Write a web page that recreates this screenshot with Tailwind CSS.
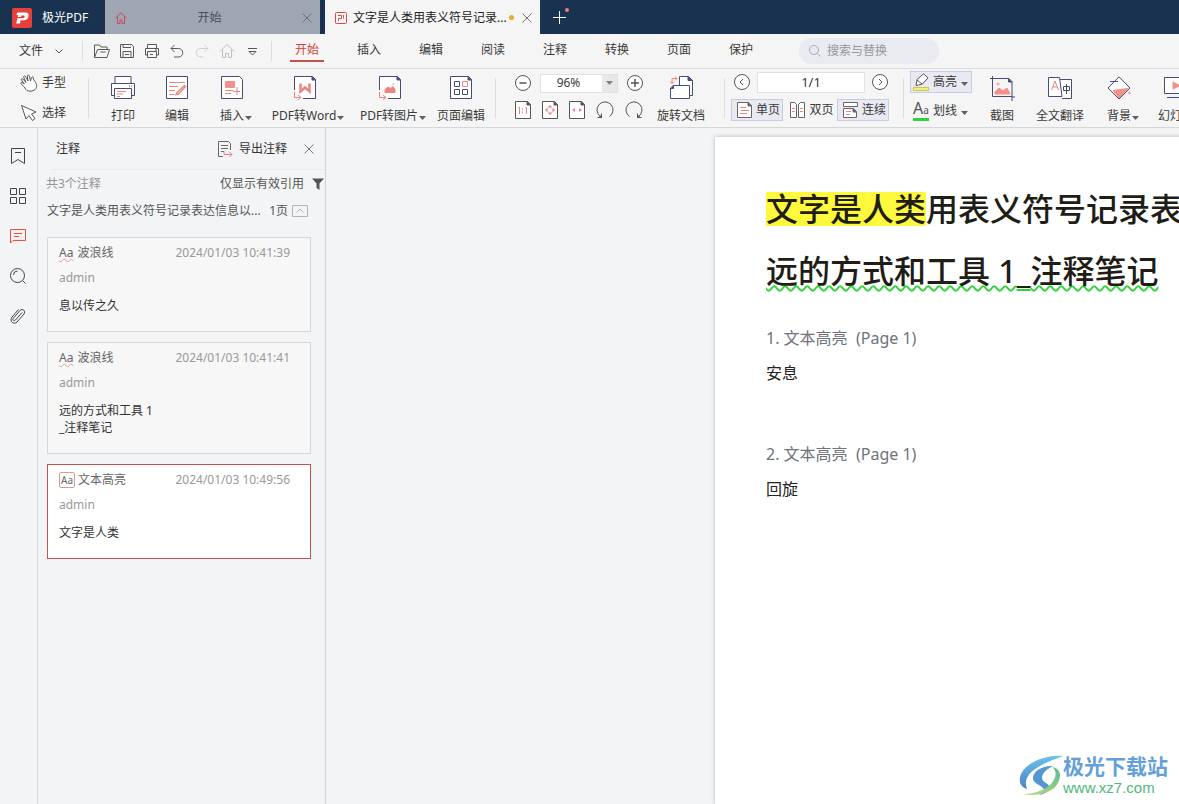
<!DOCTYPE html>
<html lang="zh-CN">
<head>
<meta charset="utf-8">
<title>极光PDF</title>
<script src="https://cdn.jsdelivr.net/npm/@tailwindcss/browser@4"></script>
</head>
<body class="flex h-screen flex-col overflow-hidden bg-[#f3f4f6] font-['Noto_Sans','Noto_Sans_CJK_SC',sans-serif] text-xs text-[#333]">

<svg class="hidden">
  <symbol id="caret" viewBox="0 0 7 4"><path d="M0 0h7L3.500 4z" fill="#606060"/></symbol>
  <symbol id="close" viewBox="0 0 10 10"><path d="M.5.5l9 9M9.500.5l-9 9" fill="none" stroke="currentColor"/></symbol>
</svg>

<header class="flex h-[34px] shrink-0 bg-[#19324f]">
  <div class="flex w-[105px] shrink-0 items-center gap-2.5 pt-px pl-3 text-white">
    <svg class="size-5" viewBox="0 0 20 20"><rect width="20" height="20" rx="2" fill="#e5403c"/><path d="M5.500 4.500h8c2.500 0 3.400 1.600 3 4-.5 2.600-2.300 3.800-4.800 3.800H8.600L8 15.500H4.300l1-5.200h5.200c1.200 0 1.900-.4 2.100-1.400.2-1.100-.3-1.500-1.400-1.500H9.300L9 9H5.700l.4-2H4.300z" fill="#fff"/></svg>
    <span>极光PDF</span>
  </div>
  <nav class="flex min-w-0">
    <div class="mr-[5px] flex w-[215px] items-center bg-[#9da6b2] pt-px pr-2 pl-2.5 text-[#4a5058]">
      <svg class="size-3 text-[#d2494b]" viewBox="0 0 12 12" fill="none" stroke="currentColor"><path d="M.5 6L6 .8 11.500 6M2.500 4.500v7h2.500V8h2v3.500h2.500v-7"/></svg>
      <a href="#" class="mr-2.5 flex-1 text-center">开始</a>
      <button aria-label="关闭开始" class="text-[#68707a]"><svg class="size-2.5"><use href="#close"/></svg></button>
    </div>
    <div class="flex w-[215px] items-center bg-[#f5f5f6] pt-px pr-2 pl-2.5 text-[#222]">
      <svg class="mr-1.5 size-3 shrink-0" viewBox="0 0 12 12" fill="none" stroke="#d14b49"><rect x=".5" y=".5" width="11" height="11" rx="1"/><path d="M3.500 9V6.500H6.500V3.500H3M8.500 3v3.500"/></svg>
      <a href="#" class="whitespace-nowrap">文字是人类用表义符号记录...</a>
      <span class="ml-auto size-[5px] rounded-full bg-[#e8ab2e]"></span>
      <button aria-label="关闭文档" class="ml-2 text-[#777]"><svg class="size-2.5"><use href="#close"/></svg></button>
    </div>
    <button aria-label="新建标签页" class="pl-3"><svg class="h-5 w-[18px]" viewBox="0 0 18 20"><path d="M1 10.500h13M7.500 4v13" stroke="#fff" fill="none"/><circle cx="15" cy="3" r="2" fill="#e87f7d"/></svg></button>
  </nav>
</header>

<div class="flex h-[35px] shrink-0 items-center border-b border-[#dcdde0] bg-[#f5f5f6] text-[#3a3a3a]">
  <button class="ml-[19px] flex w-[63px] items-center gap-3">文件<svg class="h-[5px] w-2" viewBox="0 0 8 5"><path d="M.5.5L4 4 7.500.5" fill="none" stroke="#555"/></svg></button>
  <span class="mr-[11px] h-5 w-px bg-[#dcdde0]"></span>
  <div class="flex items-center gap-[9px] text-[#5a5a5a]">
    <button aria-label="打开"><svg class="size-4" viewBox="0 0 16 16" fill="none" stroke="currentColor"><path d="M.5 14V2h5l1.500 2h6v2.500M.5 14.500l3-8h12l-2.500 8zM6.500 9h5"/></svg></button>
    <button aria-label="保存"><svg class="size-4" viewBox="0 0 16 16" fill="none" stroke="currentColor"><path d="M1.500 1.500h11l2 2v11h-13zM4 1.500v3h8M4 14V8.500h8V14M6 11.500h4"/></svg></button>
    <button aria-label="打印"><svg class="size-4" viewBox="0 0 16 16" fill="none" stroke="currentColor"><path d="M3.500 5V1.500h9V5M3.500 12H1.500V5.500h13V12h-2M3.500 8.500h9v6h-9zM11 7h2M6 11.500h3"/></svg></button>
    <button aria-label="撤销"><svg class="size-4" viewBox="0 0 16 16" fill="none" stroke="currentColor"><path d="M5.500 2L2 5.500 5.500 9M2 5.500h7.500a4.200 4.200 0 010 8.500H5"/></svg></button>
    <button aria-label="重做" class="text-[#cfcfcf]"><svg class="size-4" viewBox="0 0 16 16" fill="none" stroke="currentColor"><path d="M10.500 2L14 5.500 10.500 9M14 5.500H6.500a4.200 4.200 0 000 8.500H9"/></svg></button>
    <button aria-label="主页" class="text-[#bdbdbd]"><svg class="size-4" viewBox="0 0 16 16" fill="none" stroke="currentColor"><path d="M1 8.500l7-7 7 7M3.500 6.500v8h3v-4h3v4h3v-8"/></svg></button>
    <button aria-label="更多"><svg class="size-4" viewBox="0 0 16 16" fill="none" stroke="currentColor"><path d="M4 5.500h9M5 8.500h7l-3.500 3.500z"/></svg></button>
  </div>
  <span class="ml-[11px] h-5 w-px bg-[#dcdde0]"></span>
  <nav class="ml-[18px] flex gap-7">
    <a href="#" class="w-[34px] border-b-2 border-[#c5514d] text-center leading-5 text-[#d03f3b]">开始</a>
    <a href="#" class="w-[34px] text-center leading-5">插入</a>
    <a href="#" class="w-[34px] text-center leading-5">编辑</a>
    <a href="#" class="w-[34px] text-center leading-5">阅读</a>
    <a href="#" class="w-[34px] text-center leading-5">注释</a>
    <a href="#" class="w-[34px] text-center leading-5">转换</a>
    <a href="#" class="w-[34px] text-center leading-5">页面</a>
    <a href="#" class="w-[34px] text-center leading-5">保护</a>
  </nav>
  <label class="ml-[41px] flex h-[26px] w-[140px] items-center gap-1.5 rounded-full bg-[#e9eaf2] pl-2.5">
    <svg class="size-3 shrink-0" viewBox="0 0 12 12" fill="none" stroke="#a9aab2"><circle cx="5" cy="5" r="4.500"/><path d="M8.500 8.500l3 3"/></svg>
    <input aria-label="搜索与替换" placeholder="搜索与替换" class="w-24 bg-transparent outline-none placeholder:text-[#96979d]">
  </label>
</div>

<div class="flex h-[59px] shrink-0 items-center overflow-hidden border-b border-[#d4d6d8] bg-[#f5f5f5] whitespace-nowrap text-[#3a3a3a] *:shrink-0">
  <div class="flex w-[88px] flex-col gap-3 pl-5">
    <button class="flex items-center gap-1"><svg class="size-[18px]" viewBox="0 0 18 18" fill="#fff" stroke="#555"><path d="M6 15.500c-1-2-3.500-4-5-5.800-.6-1 .6-1.700 1.500-1l1.800 1.200L1.500 6c-.7-1.300.8-2 1.600-.9L6 8.500 3.800 3.300c-.5-1.400 1.100-2 1.800-.7L8 7 7.300 2.200c-.1-1.400 1.600-1.500 2-.2L10.500 7l1-3.400c.4-1.200 2-.9 1.800.4-.3 2 2.400 3.500 3.200 6.500s-1.500 6-4.500 6.500S7 17 6 15.500z"/></svg>手型</button>
    <button class="flex items-center gap-1"><svg class="size-[18px]" viewBox="0 0 18 18" fill="#fff" stroke="#555"><path d="M1.500 1.500L6 15l3-3.500 3.500 5 2.500-2-3.500-4.500 4.500-2z"/></svg>选择</button>
  </div>
  <span class="mr-[7px] h-10 w-px bg-[#dcdde0]"></span>
  <button class="flex w-[54px] flex-col items-center gap-1.5 pt-1.5"><svg class="size-6" viewBox="0 0 24 24" fill="#fff" stroke="#474b76"><path d="M4 8V.5h16V8"/><path d="M3.500 19.500h-3v-12h23v12h-3"/><path d="M3.500 12.500h17v10h-17zM18 10h1M20 10h1"/><path d="M6 15.500h9M6 18h6M6 20.500h3" stroke="#e98680"/></svg><span class="leading-5">打印</span></button>
  <button class="flex w-[54px] flex-col items-center gap-1.5 pt-1.5"><svg class="size-6" viewBox="0 0 24 24" fill="none" stroke="#474b76"><path d="M1.500.5h21v22h-21z" fill="#fff"/><path d="M4 6.500h16M4 10.500h9M4 14.500h6M4 18.500h5" stroke="#e98680"/><path d="M20 9l-8 7.500-1 2 2.500-.5L21 10" stroke="#e98680" stroke-width="1.400"/></svg><span class="leading-5">编辑</span></button>
  <button class="flex w-14 flex-col items-center gap-1.5 pt-1.5"><svg class="size-6" viewBox="0 0 24 24" fill="none" stroke="#474b76"><path d="M1.500.5h18l3 3v19h-21z" fill="#fff"/><path d="M5.500 5.500h9v6h-9z" fill="#f58f89" stroke="#f58f89"/><path d="M5 14.500h8M5 17.500h6M17 11v8M13 15.500h7" stroke="#e98680"/></svg><span class="-mr-2 flex items-center gap-px leading-5">插入<svg class="mt-1 h-1 w-[7px]"><use href="#caret"/></svg></span></button>
  <button class="flex w-[90px] flex-col items-center gap-1.5 pt-1.5"><svg class="size-6" viewBox="0 0 24 24" fill="none" stroke="#474b76"><path d="M1.500 14V.5h18l3 3v19H10" fill="#fff"/><path d="M19 .5V4h3.500" fill="#474b76"/><path d="M7.500 7.500v8l4.500-4 4.500 4v-8" stroke="#e98680" stroke-width="2.500"/><path d="M1.500 16v5.500h6M5 19l3 2.500L5 24" stroke="#e98680"/></svg><span class="-mr-1.5 flex items-center gap-px leading-5">PDF转Word<svg class="mt-1 h-1 w-[7px]"><use href="#caret"/></svg></span></button>
  <button class="flex w-20 flex-col items-center gap-1.5 pt-1.5"><svg class="size-6" viewBox="0 0 24 24" fill="none" stroke="#474b76"><path d="M1.500 14V.5h18l3 3v19H10" fill="#fff"/><path d="M19 .5V4h3.500" fill="#474b76"/><path d="M7 16.500v-3l3-2.500 2.500 1.500 2.500-2 2 3v3zM14.500 8h1.500" fill="#e98680" stroke="#e98680"/><path d="M1.500 16v5.500h6M5 19l3 2.500L5 24" stroke="#e98680"/></svg><span class="-mr-1.5 flex items-center gap-px leading-5">PDF转图片<svg class="mt-1 h-1 w-[7px]"><use href="#caret"/></svg></span></button>
  <button class="flex w-[62px] flex-col items-center gap-1.5 pt-1.5"><svg class="size-6" viewBox="0 0 24 24" fill="none" stroke="#474b76"><path d="M1.500.5h18l3 3v19h-21z" fill="#fff"/><path d="M19 .5V4h3.500" fill="#474b76"/><path d="M5.500 5.500h5v5h-5zM5.500 13.500h5v5h-5zM13.500 13.500h5v5h-5z"/><path d="M13.500 5.500h5v5h-5z" stroke="#e98680"/></svg><span class="leading-5">页面编辑</span></button>
  <span class="mr-[19px] ml-[3px] h-10 w-px bg-[#dcdde0]"></span>

  <div class="flex w-32 flex-col gap-2 pb-1">
    <div class="flex items-center justify-between">
      <button aria-label="缩小"><svg class="size-4" viewBox="0 0 16 16" fill="#fff" stroke="#555"><circle cx="8" cy="8" r="7.500"/><path d="M4.500 8h7" stroke-width="1.500"/></svg></button>
      <div class="flex h-[19px] w-[78px] border border-[#dfe0e2] bg-white">
        <input aria-label="缩放比例" value="96%" class="w-0 flex-1 pr-1.5 text-center outline-none">
        <button aria-label="选择比例" class="flex w-[15px] items-center justify-center bg-[#e3e3e3] opacity-80"><svg class="h-1 w-[7px]"><use href="#caret"/></svg></button>
      </div>
      <button aria-label="放大"><svg class="size-4" viewBox="0 0 16 16" fill="#fff" stroke="#555"><circle cx="8" cy="8" r="7.500"/><path d="M4 8h8M8 4v8" stroke-width="1.500"/></svg></button>
    </div>
    <div class="flex justify-between">
      <button aria-label="实际大小"><svg class="h-[18px] w-4" viewBox="0 0 16 18" fill="none" stroke="#555"><path d="M.5.5h12l3 3v14H.5z" fill="#fff"/><path d="M12 .5V4h3.500" fill="#555"/><path d="M4.500 13V6l-1 1M11.500 13V6l-1 1M7.500 7v1.500M7.500 10.500V12" stroke="#e98680"/></svg></button>
      <button aria-label="适合页面"><svg class="h-[18px] w-4" viewBox="0 0 16 18" fill="none" stroke="#555"><path d="M.5.5h12l3 3v14H.5z" fill="#fff"/><path d="M12 .5V4h3.500" fill="#555"/><path d="M8 4l2 2H6zM8 14l2-2H6zM3 9l2-2v4zM13 9l-2-2v4z" fill="#e98680" stroke="none"/><circle cx="8" cy="9" r="2.800" stroke="#f0b0ac"/></svg></button>
      <button aria-label="适合宽度"><svg class="h-[18px] w-4" viewBox="0 0 16 18" fill="none" stroke="#555"><path d="M.5.5h12l3 3v14H.5z" fill="#fff"/><path d="M12 .5V4h3.500" fill="#555"/><path d="M3 9l3-2v4zM13 9l-3-2v4z" fill="#e98680" stroke="none"/></svg></button>
      <button aria-label="逆时针旋转"><svg class="h-[18px] w-[18px]" viewBox="0 0 18 18" fill="none" stroke="#555"><path d="M13.500 15.500a8 8 0 10-9 0M1.500 16.500h4v-4"/><path d="M3 16.500h2.500V14z" fill="#555"/></svg></button>
      <button aria-label="顺时针旋转"><svg class="h-[18px] w-[18px]" viewBox="0 0 18 18" fill="none" stroke="#555"><path d="M4.500 15.500a8 8 0 119 0M16.500 16.500h-4v-4"/><path d="M15 16.500h-2.500V14z" fill="#555"/></svg></button>
    </div>
  </div>
  <button class="ml-1.5 flex w-16 flex-col items-center gap-1.5 pt-1.5"><svg class="size-6" viewBox="0 0 24 24" fill="#fff" stroke="#474b76"><path d="M10.500 10V.5h9l4 4v15h-3"/><path d="M19 .5v4h4.500" fill="#474b76"/><path d="M1.500 12l3-2.500h16v13h-19z"/><path d="M4.500 9.500v3h-3" fill="#474b76"/><path d="M8 2.500H3v5M6 .5l2 2-2 2M1 5.500l2 2 2-2" stroke="#e98680" fill="none"/></svg><span class="leading-5">旋转文档</span></button>
  <span class="mr-1.5 ml-[11px] h-10 w-px bg-[#dcdde0]"></span>

  <div class="flex w-[158px] flex-col gap-1.5 pb-1">
    <div class="flex items-center justify-between pr-px pl-[3px]">
      <button aria-label="上一页"><svg class="size-4" viewBox="0 0 16 16" fill="#fff" stroke="#555"><circle cx="8" cy="8" r="7.500"/><path d="M9 5L6 8l3 3" fill="none"/></svg></button>
      <input aria-label="页码" value="1/1" class="h-[21px] w-[108px] border border-[#e2e2e4] bg-white text-center text-[13px] outline-none">
      <button aria-label="下一页"><svg class="size-4" viewBox="0 0 16 16" fill="#fff" stroke="#555"><circle cx="8" cy="8" r="7.500"/><path d="M7 5l3 3-3 3" fill="none"/></svg></button>
    </div>
    <div class="flex items-center justify-between">
      <button class="flex h-[22px] items-center gap-1 border border-[#c9cce0] bg-[#e8e9f3] pr-0.5 pl-[5px]"><svg class="h-4 w-[15px]" viewBox="0 0 15 16" fill="none" stroke="#666"><path d="M.5.5h11l3 3v12H.5z" fill="#fff"/><path d="M11 .5V4h3.500" fill="#666"/><path d="M3 5.500h6M4 8.500h8M3 11.500h7" stroke="#e98680"/></svg>单页</button>
      <button class="flex items-center gap-1 pl-1"><svg class="h-4 w-[15px]" viewBox="0 0 15 16" fill="#fff" stroke="#666"><path d="M.5.5h4l2 2v13h-6zM14.500.5h-4l-2 2v13h6z"/><path d="M2 6.500h3M2 9.500h3M10 6.500h3M10 9.500h3" stroke="#e98680"/></svg>双页</button>
      <button class="flex h-[22px] items-center gap-1 border border-[#c9cce0] bg-[#e8e9f3] pr-0.5 pl-1"><svg class="h-4 w-4" viewBox="0 0 16 16" fill="#fff" stroke="#666"><path d="M1.500.5h14v4h-14zM1.500 6.500h10l3 3v6h-13z"/><path d="M11 6.500V10h3.500" fill="#666"/><path d="M4 9.500h5M4 12.500h4" stroke="#e98680"/></svg>连续</button>
    </div>
  </div>
  <span class="mr-1.5 ml-[14px] h-10 w-px bg-[#dcdde0]"></span>

  <div class="flex w-[62px] flex-col gap-2 pb-1">
    <button class="flex h-[22px] items-center gap-1 border border-[#c9cce0] bg-[#e8e9f3] pl-0.5"><svg class="h-[18px] w-4 shrink-0" viewBox="0 0 16 18" fill="#fff" stroke="#555"><path d="M3 12.500l1-6L10.500.8l4.500 4L9.500 11l-4 1zM4 7l5 4"/><path d="M.5 14.500h15v3H.5z" fill="#f3f07a" stroke="#c9c65a"/></svg>高亮<svg class="mt-1 h-1 w-[7px]"><use href="#caret"/></svg></button>
    <button class="flex items-center gap-1 pl-[3px]"><span class="w-4 border-b-[3px] border-[#2fd23a] text-base leading-[15px] text-[#555]">A<span class="text-[10px]">a</span></span>划线<svg class="mt-1 h-1 w-[7px]"><use href="#caret"/></svg></button>
  </div>
  <button class="ml-[3px] flex w-[54px] flex-col items-center gap-1.5 pt-1.5"><svg class="size-6" viewBox="0 0 24 24" fill="none" stroke="#474b76" overflow="visible"><path d="M0 2.500h19l3 3v15H2.500V0M22 20v5M22 21h3"/><path d="M18.500 2.500V6H22" fill="#474b76"/><path d="M5 18v-2l4-4 4 3 4-3 3 6z" fill="#f58f89" stroke="#f58f89"/><circle cx="8" cy="8" r="1" stroke="#f58f89"/></svg><span class="leading-5">截图</span></button>
  <button class="flex w-[62px] flex-col items-center gap-1.5 pt-1.5"><svg class="size-6" viewBox="0 0 24 24" fill="#fff" stroke="#474b76"><path d="M12 3.500h11.500v19H14"/><path d="M.5 1.500h11l2.500 19H.5z"/><path d="M3.500 14L7 5l3.500 9M5 11h4" stroke="#e98680" fill="none"/><path d="M15.500 10.500h6v4h-6zM18.500 8v10" fill="none"/></svg><span class="leading-5">全文翻译</span></button>
  <button class="flex w-14 flex-col items-center gap-1.5 pt-1.5"><svg class="size-6" viewBox="0 0 24 24" fill="none" stroke="#474b76"><path d="M12 .8L23 12 12 23 1 12z" fill="#fff"/><path d="M6 14.500l15-2-9 9.500z" fill="#f58f89" stroke="#f58f89"/><path d="M3 5.500h8"/><circle cx="22.500" cy="17" r=".8" stroke="#f58f89"/></svg><span class="-mr-2 flex items-center gap-px leading-5">背景<svg class="mt-1 h-1 w-[7px]"><use href="#caret"/></svg></span></button>
  <button class="flex w-[58px] flex-col items-center gap-1.5 pt-1.5"><svg class="size-6" viewBox="0 0 24 24" fill="#fff" stroke="#474b76"><path d="M.5 1.500h23v16H.5zM3 21.500h18"/><path d="M9 6l7 3.500L9 13z" fill="#f58f89" stroke="#f58f89"/></svg><span class="leading-5">幻灯片</span></button>
</div>

<div class="flex min-h-0 flex-1">
  <nav class="flex w-[38px] shrink-0 flex-col items-center gap-5 border-r border-[#d8dadd] pt-[18px] pr-0.5 text-[#444]">
    <button aria-label="书签"><svg class="size-5" viewBox="0 0 20 20" fill="none" stroke="currentColor"><path d="M3.500 2.500h13v15L10 13.500l-6.500 4zM7 6.500h6"/></svg></button>
    <button aria-label="缩略图"><svg class="size-5" viewBox="0 0 20 20" fill="none" stroke="currentColor"><path d="M2.500 2.500h6v6h-6zM11.500 2.500h6v6h-6zM2.500 11.500h6v6h-6zM11.500 11.500h6v6h-6z"/></svg></button>
    <button aria-label="注释" class="text-[#d9534f]"><svg class="size-5" viewBox="0 0 20 20" fill="#fdeeee" stroke="currentColor"><path d="M2.500 17V3.500h15v11H5zM6 7.500h8M6 10.500h5"/></svg></button>
    <button aria-label="搜索"><svg class="size-5" viewBox="0 0 20 20" fill="none" stroke="currentColor"><circle cx="9.500" cy="9.500" r="7"/><path d="M14.500 14.500l3 3M5.500 9a4 4 0 014-4"/></svg></button>
    <button aria-label="附件"><svg class="size-5" viewBox="0 0 20 20" fill="none" stroke="currentColor"><path d="M14 6.500l-6.500 7.500c-1.500 1.500-3.500 0-2-2l6.500-7.500c2.500-2.500 6 .5 4 3.500L9 16c-3 3-8-.5-5-5l6.500-7.500"/></svg></button>
  </nav>

  <aside class="flex w-[288px] shrink-0 flex-col border-r border-[#d0d2d6]">
    <div class="ml-[14px] flex h-[42px] items-center border-b border-[#e8e9eb] pt-px pr-[11px] pl-1">
      <h2>注释</h2>
      <button class="ml-auto flex items-center gap-1.5"><svg class="size-4" viewBox="0 0 16 16" fill="none" stroke="#666"><path d="M6 15.500H1.500V.5h10l2 2V9M4 4.500h7M4 7.500h7M4 10.500h3"/><path d="M7 10.500v3h8M12 10.500l3 3-3 3" stroke="#ea7d77"/></svg>导出注释</button>
      <button aria-label="关闭面板" class="ml-[17px] text-[#777]"><svg class="size-2.5"><use href="#close"/></svg></button>
    </div>
    <div class="flex h-7 items-center pl-2 text-[#555]">
      <span class="text-[#959595]">共3个注释</span>
      <button class="ml-auto flex items-center gap-2">仅显示有效引用<svg class="mr-px h-3 w-3" viewBox="0 0 12 12"><path d="M0 .5h12L7.500 5.500V12l-3-2V5.500z" fill="#555"/></svg></button>
    </div>
    <div class="flex h-[25px] items-center pl-[9px] text-[#555]">
      <span>文字是人类用表义符号记录表达信息以...</span>
      <span class="ml-auto">1页</span>
      <button aria-label="折叠" class="mr-[17px] ml-1"><svg class="h-3 w-4" viewBox="0 0 16 12" fill="none" stroke="#b2b2b2"><path d="M.5.5h15v11H.5zM4.500 7.500L8 4l3.500 3.500"/></svg></button>
    </div>
    <div class="mt-[14px] mr-[14px] ml-[9px] flex flex-col gap-[10px]">
      <article class="border border-[#d5d6d8] bg-[#f7f7f7] px-[11px] pt-[5px] pb-[17px]">
        <div class="flex items-center pr-[9px] leading-5"><span class="mr-1 underline decoration-[#e59994] decoration-wavy decoration-1 underline-offset-1 text-[#666]">Aa</span><span class="text-[#666]">波浪线</span><time class="ml-auto text-[#999]">2024/01/03 10:41:39</time></div>
        <p class="mt-[5px] leading-5 text-[#999]">admin</p>
        <p class="mt-[9px] leading-[17px]">息以传之久</p>
      </article>
      <article class="border border-[#d5d6d8] bg-[#f7f7f7] px-[11px] pt-[5px] pb-[17px]">
        <div class="flex items-center pr-[9px] leading-5"><span class="mr-1 underline decoration-[#e59994] decoration-wavy decoration-1 underline-offset-1 text-[#666]">Aa</span><span class="text-[#666]">波浪线</span><time class="ml-auto text-[#999]">2024/01/03 10:41:41</time></div>
        <p class="mt-[5px] leading-5 text-[#999]">admin</p>
        <p class="mt-[9px] leading-[17px]">远的方式和工具 1<br>_注释笔记</p>
      </article>
      <article class="border border-[#c4534f] bg-white px-[11px] pt-[5px] pb-[17px]">
        <div class="flex items-center pr-[9px] leading-5"><span class="mr-[3px] flex size-4 items-center justify-center rounded-xs border border-[#dc9a96] text-[10px] text-[#666]">Aa</span><span class="text-[#666]">文本高亮</span><time class="ml-auto text-[#999]">2024/01/03 10:49:56</time></div>
        <p class="mt-[5px] leading-5 text-[#999]">admin</p>
        <p class="mt-[9px] leading-[17px]">文字是人类</p>
      </article>
    </div>
  </aside>

  <main class="relative flex min-w-0 flex-1 overflow-hidden pt-[9px] pl-[389px]">
    <section class="flex-1 bg-white pt-[41px] pl-[51px] whitespace-nowrap shadow-[0_0_4px_rgba(0,0,0,0.25)]">
      <h1 class="text-[32px] leading-[62px] font-medium text-[#201d16]"><mark class="inline-block bg-[#fff93e] leading-[34px] text-inherit">文字是人类</mark>用表义符号记录表达信息以传之久<br><span class="underline decoration-[#2bd435] decoration-wavy decoration-2 underline-offset-2 [text-decoration-skip-ink:none]">远的方式和工具 1</span><span class="underline decoration-[#2bd435] decoration-2 underline-offset-6 [text-decoration-skip-ink:none]">_</span><span class="underline decoration-[#2bd435] decoration-wavy decoration-2 underline-offset-2 [text-decoration-skip-ink:none]">注释笔记</span></h1>
      <h2 class="mt-[23px] text-base leading-[26px] whitespace-pre text-[#6f737b]">1. 文本高亮  (Page 1)</h2>
      <p class="mt-[9px] text-base leading-[26px] text-[#222]">安息</p>
      <h2 class="mt-[55px] text-base leading-[26px] whitespace-pre text-[#6f737b]">2. 文本高亮  (Page 1)</h2>
      <p class="mt-[9px] text-base leading-[26px] text-[#222]">回旋</p>
    </section>
    <a href="#" class="absolute right-[11px] bottom-[6px] flex items-center">
      <svg class="h-11 w-11" viewBox="0 0 44 44"><defs><linearGradient id="wm" x1="0" y1="0" x2="0" y2="1"><stop offset="0" stop-color="#6cc3ea"/><stop offset="1" stop-color="#4a82c6"/></linearGradient><linearGradient id="wm2" x1="1" y1="0" x2="0" y2="1"><stop offset="0" stop-color="#5cba8f"/><stop offset="1" stop-color="#bfe07a"/></linearGradient></defs><path d="M44 2C28 0 3 9 1 24c-1 6 2 9 7 11-3-8 0-14 8-20C23 10 33 6 44 2z" fill="url(#wm)"/><path d="M34 12c-11-1-21 6-20 13 1 5 8 6 10 9 2 2 0 5-4 7 7-1 11-5 10-9-1-3-7-4-7-8 0-5 5-9 11-12z" fill="#5297d2"/><path d="M33 13c6 4 4 12-2 18-7 6-17 9-27 9 13 3 27-1 33-8 6-8 6-17-4-19z" fill="url(#wm2)"/></svg>
      <span class="flex flex-col font-bold"><span class="text-[21px] leading-6 text-[#64a0d8]">极光下载站</span><span class="font-['Liberation_Sans',sans-serif] text-[15px] leading-5 font-normal text-[#4fb878]">www.xz7.com</span></span>
    </a>
  </main>
</div>
</body>
</html>
